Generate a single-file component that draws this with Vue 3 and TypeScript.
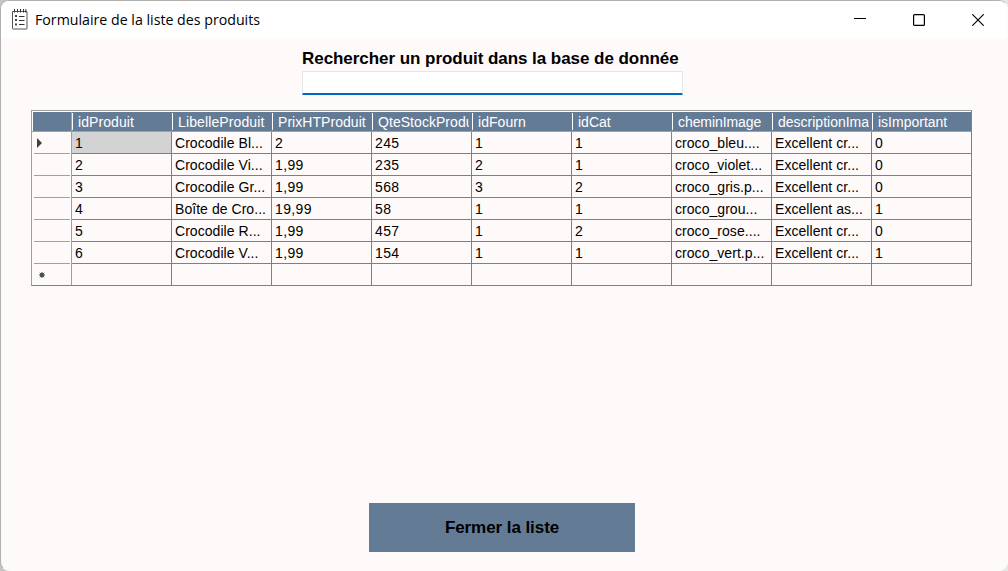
<script setup lang="ts">
interface Column { name: string; spacing: number }

const columns: Column[] = [
  { name: 'idProduit', spacing: 0.08 },
  { name: 'LibelleProduit', spacing: 0.12 },
  { name: 'PrixHTProduit', spacing: 0.05 },
  { name: 'QteStockProdu', spacing: 0.05 },
  { name: 'idFourn', spacing: 0.05 },
  { name: 'idCat', spacing: 0 },
  { name: 'cheminImage', spacing: -0.07 },
  { name: 'descriptionIma', spacing: 0 },
  { name: 'isImportant', spacing: 0 },
]

const rows: string[][] = [
  ['1', 'Crocodile Bl...', '2', '245', '1', '1', 'croco_bleu....', 'Excellent cr...', '0'],
  ['2', 'Crocodile Vi...', '1,99', '235', '2', '1', 'croco_violet...', 'Excellent cr...', '0'],
  ['3', 'Crocodile Gr...', '1,99', '568', '3', '2', 'croco_gris.p...', 'Excellent cr...', '0'],
  ['4', 'Boîte de Cro...', '19,99', '58', '1', '1', 'croco_grou...', 'Excellent as...', '1'],
  ['5', 'Crocodile R...', '1,99', '457', '1', '2', 'croco_rose....', 'Excellent cr...', '0'],
  ['6', 'Crocodile V...', '1,99', '154', '1', '1', 'croco_vert.p...', 'Excellent cr...', '1'],
  ['', '', '', '', '', '', '', '', ''],
]

const isNumeric = (v: string): boolean => /^[\d,]+$/.test(v)
</script>

<template>
  <div class="desktop">
    <div class="window">
      <header class="titlebar">
        <svg class="app-icon" width="16" height="21" viewBox="0 0 16 21">
          <path d="M.5 2.5h14.5v17q0 .5-.5.5H1q-.5 0-.5-.5z" fill="#fff" stroke="#555" />
          <path d="M2.5 0v3.5M5.5 0v3.5M8.5 0v3.5M11.5 0v3.5M13.8 0v3.5" stroke="#333" stroke-width="1" />
          <path d="M3 6h2v2H3zM3 10h2v2H3zM3 14.500h2v2H3z" fill="#444" />
          <path d="M7 7.5h5.500M7 11.5h5.500M7 15.5h5.500" stroke="#333" />
        </svg>
        <span class="title">Formulaire de la liste des produits</span>
        <div class="controls">
          <svg width="12" height="12" viewBox="0 0 12 12"><path d="M0 4.5h12" stroke="#000" /></svg>
          <svg width="12" height="12" viewBox="0 0 12 12"><rect x=".6" y=".6" width="10.8" height="10.8" rx="1" fill="none" stroke="#000" stroke-width="1.2" /></svg>
          <svg width="12" height="12" viewBox="0 0 12 12"><path d="M.3.3l11.4 11.4M11.7.3L.3 11.7" stroke="#000" stroke-width="1.15" /></svg>
        </div>
      </header>
      <main class="content">
        <label class="label" for="search">Rechercher un produit dans la base de donnée</label>
        <input id="search" class="search" type="text" />
        <div class="grid">
          <div class="row head">
            <div class="corner"></div>
            <div v-for="c in columns" :key="c.name" class="hcell">
              <span class="htext" :style="{ letterSpacing: c.spacing + 'px' }">{{ c.name }}</span>
            </div>
          </div>
          <div v-for="(r, i) in rows" :key="i" class="row">
            <div class="rowhead">
              <svg v-if="i === 0" width="5" height="10" viewBox="0 0 5 10"><path d="M0 0l5 5-5 5z" fill="#404040" /></svg>
              <svg v-if="i === 6" class="star" width="6" height="6" viewBox="0 0 6 6"><circle cx="3" cy="3" r="2.200" fill="#505050" /><path d="M3 0v6M0 3h6M.8.8l4.400 4.400M5.200.8L.8 5.200" stroke="#505050" /></svg>
            </div>
            <div v-for="(v, j) in r" :key="j" class="cell" :class="{ selected: i === 0 && j === 0, num: isNumeric(v) }">{{ v }}</div>
          </div>
        </div>
        <button class="close-list" type="button">Fermer la liste</button>
      </main>
    </div>
  </div>
</template>

<style>
body { margin: 0; overflow: hidden; }
</style>

<style scoped>
* { box-sizing: border-box; }
.desktop { width: 1008px; height: 571px; background: linear-gradient(90deg, #c4c4c4, #e6e6e6); }
.window {
  width: 1008px; height: 571px; border: 1px solid #b0b0b0; border-right-color: #fffafa; border-bottom-color: #fffafa;
  border-radius: 9px; overflow: hidden; background: #fffafa;
}
.titlebar { height: 37px; background: #fff; display: flex; align-items: center; padding: 0 23px 0 11px; }
.app-icon { flex: none; }
.title { font: 14.2px "Open Sans", sans-serif; color: #000; margin-left: 7px; white-space: nowrap; }
.controls { margin-left: auto; display: flex; gap: 47px; }
.content {
  height: 532px; display: flex; flex-direction: column;
  font-family: "Liberation Sans", Arial, sans-serif; color: #000;
}
.label { margin: 10px 0 0 301px; height: 23px; line-height: 21px; font-size: 17px; font-weight: bold; letter-spacing: -0.05px; white-space: nowrap; }
.search {
  margin-left: 301px; width: 381px; height: 24px; padding: 0 4px; background: #fff;
  border: 1px solid #e5e5e8; border-bottom: 2px solid #0067c0; border-radius: 1px; outline: none;
}
.grid { margin: 15px 0 0 30px; width: 941px; height: 176px; border: 1px solid #a0a0a0; border-right-color: #808080; border-bottom-color: #808080; }
.row { display: flex; height: 22px; }
.head { height: 21px; border-bottom: 1px solid #a0a0a0; background: #647b96; border-top: 1px solid #fff; }
.corner { width: 40px; border-left: 1px solid #fff; border-right: 1px solid #a0a0a0; flex: none; }
.hcell { flex: none; width: 100px; padding: 0 3px 0 6px; position: relative; color: #fff; font-size: 14px; line-height: 20px; white-space: nowrap; }
.htext { display: block; overflow: hidden; }
.hcell:last-child { width: 99px; }
.hcell::before { content: ""; position: absolute; left: 0; top: 1px; width: 1px; height: 17px; background: #fff; }
.rowhead { flex: none; width: 40px; border-right: 1px solid #a0a0a0; padding: 6px 0 0 5px; position: relative; }
.rowhead::after { content: ""; position: absolute; left: 2px; right: 1px; bottom: 0; height: 1px; background: #a0a0a0; }
.rowhead svg { display: block; }
.rowhead .star { margin: 2px 0 0 2px; }
.cell {
  flex: none; width: 100px; overflow: hidden; white-space: nowrap; padding-left: 3px; letter-spacing: 0.05px;
  border-right: 1px solid #808080; border-bottom: 1px solid #808080; font-size: 14px; line-height: 23px;
}
.cell.num { letter-spacing: 0.35px; }
.cell:last-child { width: 99px; border-right: 0; }
.row:last-child { height: 21px; }
.row:last-child .cell { border-bottom: 0; }
.row:last-child .rowhead::after { display: none; }
.selected { background: #d3d3d3; }
.close-list {
  margin: auto 0 18px 368px; width: 266px; height: 49px; border: 0; padding: 0; background: #647b96; color: #000;
  font: bold 17px "Liberation Sans", Arial, sans-serif; letter-spacing: -0.07px;
}
</style>
